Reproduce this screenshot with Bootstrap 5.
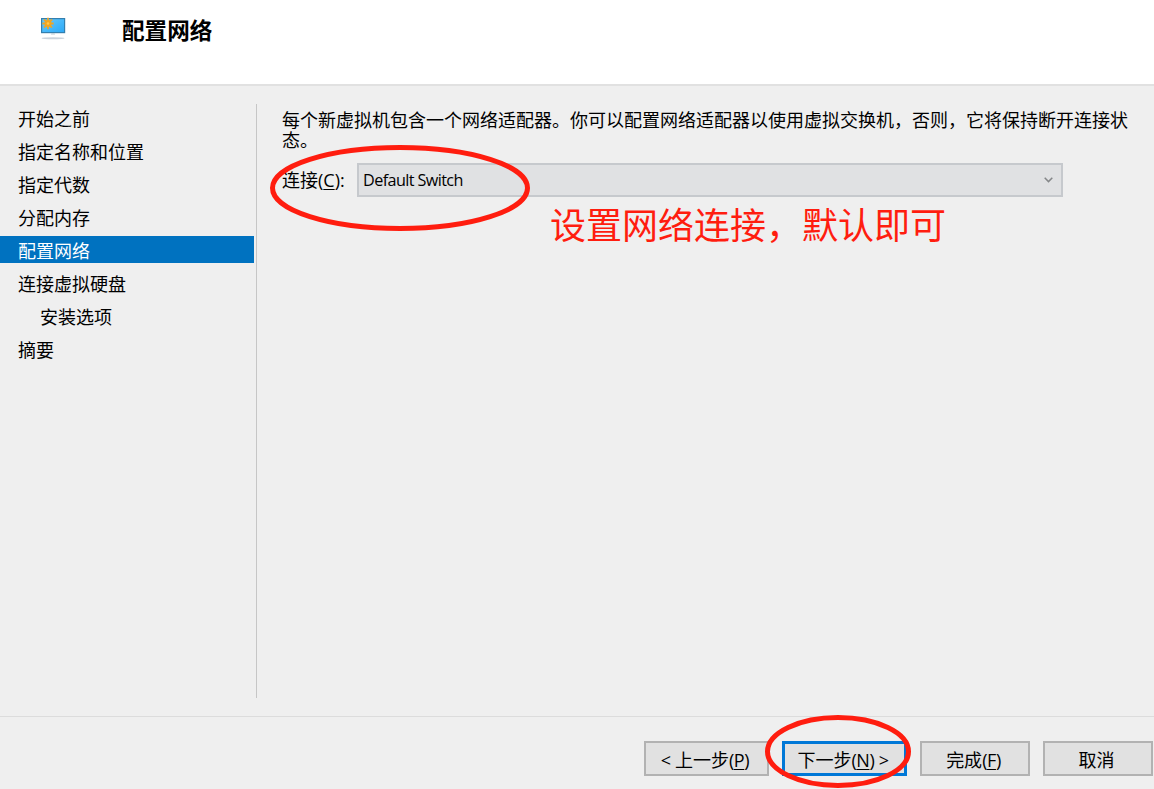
<!DOCTYPE html>
<html lang="zh-CN">
<head>
    <meta charset="UTF-8">
    <meta name="viewport" content="width=device-width, initial-scale=1.0">
    <link href="https://cdn.jsdelivr.net/npm/bootstrap@5.3.0/dist/css/bootstrap.min.css"
          rel="stylesheet">
    <title>配置网络</title>
    <style>
        body {
            font-family: "Open Sans", "Noto Sans CJK SC", sans-serif;
            font-size: 18px;
            line-height: 20px;
            color: #000;
            background-color: #efefef;
        }

        .wizard {
            height: 789px;
        }

        .wizard-header {
            height: 86px;
            padding: 17px 0 0 40px;
            border-bottom: 2px solid #e1e1e1;
        }

        .wizard-header h1 {
            font-family: "Noto Sans CJK SC", sans-serif;
            font-size: 22.6px;
            font-weight: 700;
            line-height: 26px;
            margin-left: 56px;
        }

        .wizard-body {
            height: 630px;
            padding: 18px 0;
        }

        .steps {
            width: 257px;
            padding-right: 2px;
            border-right: 1px solid #c6c6c6;
        }

        .steps .list-group {
            gap: 6px;
            --bs-list-group-bg: transparent;
            --bs-list-group-color: #000;
            --bs-list-group-active-bg: #0072c0;
        }

        .steps .list-group-item {
            height: 27px;
            padding: 5px 0 2px 18px;
            border: 0;
            border-radius: 0;
        }

        .steps .sub-step {
            padding-left: 40px;
        }

        .step-page {
            padding: 6px 20px 0 25px;
        }

        .latin {
            font-size: 18px;
            letter-spacing: 0;
        }

        .latin u {
            text-decoration-thickness: 1px;
            text-underline-offset: 2px;
        }

        .field-row {
            margin-top: 13px;
        }

        .field-label {
            width: 75px;
        }

        .switch-select {
            width: 706px;
            height: 34px;
            padding: 0 8px 0 4px;
            font-size: 16.2px;
            letter-spacing: -0.6px;
            background-color: #e0e1e3;
            border: 2px solid #c6c9cd;
            border-radius: 0;
        }

        .wizard-footer {
            height: 73px;
            gap: 13px;
            padding: 24px 1px 0 0;
            border-top: 1px solid #dcdcdc;
        }

        .wizard-btn {
            --bs-btn-padding-x: 0;
            --bs-btn-padding-y: 0;
            --bs-btn-font-size: 18px;
            --bs-btn-line-height: 20px;
            --bs-btn-color: #000;
            --bs-btn-bg: #e1e1e1;
            --bs-btn-border-color: #b2b2b2;
            --bs-btn-border-width: 2px;
            --bs-btn-border-radius: 0;
            width: 110px;
            height: 35px;
            padding: 2px 3px 0 0;
            white-space: nowrap;
        }

        .wizard-btn .latin {
            letter-spacing: -0.4px;
        }

        .wizard-btn.wide {
            width: 125px;
        }

        .wizard-btn.focused {
            --bs-btn-border-color: #0078d7;
            --bs-btn-border-width: 3px;
        }

        /* red pen marks drawn over the dialog */
        .pen-marks {
            inset: 0;
            pointer-events: none;
        }

        .pen-note {
            left: 550px;
            top: 201px;
            font-family: "Noto Sans CJK SC", sans-serif;
            font-size: 36px;
            font-weight: 400;
            line-height: 44px;
            color: #ff1d0f;
        }
    </style>
</head>
<body>

<div class="wizard position-relative d-flex flex-column overflow-hidden">
    <header class="wizard-header d-flex align-items-start bg-white">
        <svg width="26" height="24" viewBox="0 0 26 24">
            <defs>
                <linearGradient id="screen" x1="0" y1="0" x2="1" y2="1">
                    <stop offset="0" stop-color="#6fcaf8"/>
                    <stop offset=".55" stop-color="#45b8fb"/>
                    <stop offset="1" stop-color="#2ea8f5"/>
                </linearGradient>
            </defs>
            <rect x="1.6" y="1.6" width="23" height="14" fill="url(#screen)" stroke="#347fae" stroke-width="1.2"/>
            <path d="M11.5 16.2h3l.6 1.4h-4.2z" fill="#b9cbd6"/>
            <ellipse cx="13" cy="21.2" rx="11.5" ry="1" fill="#cbd3dc"/>
            <path d="M8 .8v11.400M2.300 6.500h11.400M4 2.500l8 8M12 2.500l-8 8" stroke="#e9a52c" stroke-width="1.800"/>
            <circle cx="8" cy="6.500" r="3.400" fill="#f3a51f"/>
            <circle cx="8" cy="6.500" r="1.300" fill="#ffc94e"/>
        </svg>
        <h1 class="mb-0">配置网络</h1>
    </header>

    <div class="wizard-body d-flex">
        <nav class="steps flex-shrink-0">
            <div class="list-group">
                <div class="list-group-item">开始之前</div>
                <div class="list-group-item">指定名称和位置</div>
                <div class="list-group-item">指定代数</div>
                <div class="list-group-item">分配内存</div>
                <div class="list-group-item active mt-0">配置网络</div>
                <div class="list-group-item">连接虚拟硬盘</div>
                <div class="list-group-item sub-step">安装选项</div>
                <div class="list-group-item">摘要</div>
            </div>
        </nav>
        <main class="step-page flex-grow-1">
            <p class="mb-0">每个新虚拟机包含一个网络适配器。你可以配置网络适配器以使用虚拟交换机，否则，它将保持断开连接状态。</p>
            <div class="field-row d-flex align-items-center">
                <label class="field-label text-nowrap">连接<span class="latin">(<u>C</u>):</span></label>
                <div class="switch-select d-flex align-items-center justify-content-between">
                    <span>Default Switch</span>
                    <svg width="9" height="6" viewBox="0 0 9 6">
                        <path d="M.7.800l3.800 3.800L8.300.800" fill="none" stroke="#858789" stroke-width="1.500"/>
                    </svg>
                </div>
            </div>
        </main>
    </div>

    <footer class="wizard-footer d-flex justify-content-end align-items-start">
        <button type="button" class="btn wizard-btn wide"><span class="latin">&lt; </span>上一步<span class="latin">(<u>P</u>)</span></button>
        <button type="button" class="btn wizard-btn wide focused">下一步<span class="latin">(<u>N</u>) &gt;</span></button>
        <button type="button" class="btn wizard-btn">完成<span class="latin">(<u>F</u>)</span></button>
        <button type="button" class="btn wizard-btn">取消</button>
    </footer>

    <svg class="pen-marks position-absolute" width="1154" height="789" viewBox="0 0 1154 789"
         fill="none" stroke="#ff1d0f" stroke-width="5">
        <ellipse cx="400" cy="188" rx="127.500" ry="40.500"/>
        <ellipse cx="838" cy="751.500" rx="70.500" ry="34"/>
    </svg>
    <div class="pen-note position-absolute text-nowrap">设置网络连接，默认即可</div>
</div>

<script src="https://cdn.jsdelivr.net/npm/bootstrap@5.3.0/dist/js/bootstrap.bundle.min.js"></script>
</body>
</html>
